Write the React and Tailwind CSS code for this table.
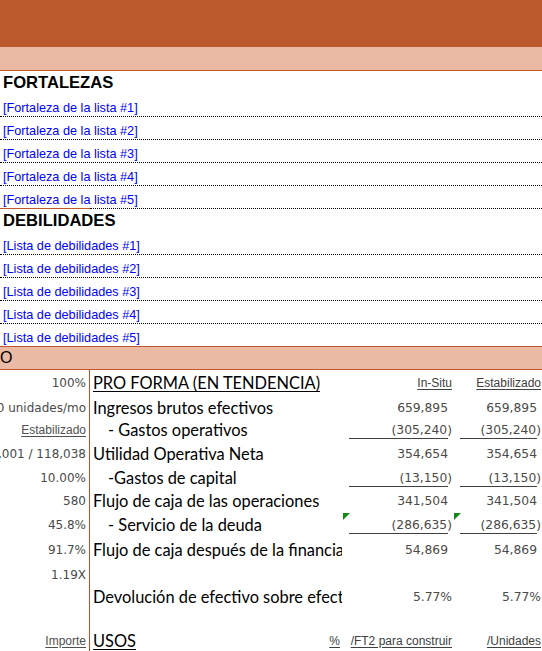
import React from 'react'

// ── fuentes ──────────────────────────────────────
const ARIAL = { fontFamily: '"Liberation Sans", Arial, sans-serif' }
const GILL = { fontFamily: 'Lato, "Open Sans", sans-serif' }
const NUM = { fontFamily: '"DejaVu Sans", Verdana, sans-serif' }

const fortalezas = [1, 2, 3, 4, 5].map((n) => `[Fortaleza de la lista #${n}]`)
const debilidades = [1, 2, 3, 4, 5].map((n) => `[Lista de debilidades #${n}]`)

// filas de la tabla pro forma
const rows = [
  { h: 26, left: '100%', label: 'PRO FORMA (EN TENDENCIA)', head: true, c3: 'In-Situ', c4: 'Estabilizado', hdr: true },
  { h: 23, left: '240 unidades/mo', label: 'Ingresos brutos efectivos', c3: '659,895', c4: '659,895' },
  { h: 22, left: 'Estabilizado', leftU: true, label: '- Gastos operativos', indent: true, c3: '(305,240)', c4: '(305,240)', u: true },
  { h: 25, left: '72,001 / 118,038', label: 'Utilidad Operativa Neta', c3: '354,654', c4: '354,654' },
  { h: 23, left: '10.00%', label: '-Gastos de capital', indent: true, c3: '(13,150)', c4: '(13,150)', u: true },
  { h: 24, left: '580', label: 'Flujo de caja de las operaciones', c3: '341,504', c4: '341,504' },
  { h: 23, left: '45.8%', label: '- Servicio de la deuda', indent: true, c3: '(286,635)', c4: '(286,635)', u: true, tri: true },
  { h: 27, left: '91.7%', label: 'Flujo de caja después de la financiación', c3: '54,869', c4: '54,869' },
  { h: 23, left: '1.19X', label: '' },
  { h: 22, left: '', label: 'Devolución de efectivo sobre efectivo', c3: '5.77%', c4: '5.77%', pct: true },
  { h: 22, left: '', label: '' },
  { h: 21, left: 'Importe', leftU: true, label: 'USOS', head: true, pctLabel: true, c3: '/FT2 para construir', c4: '/Unidades', hdr: true },
]

function Tri() {
  return (
    <svg className="absolute left-[1px] top-0" width="7" height="7" viewBox="0 0 7 7">
      <polygon points="0,0 7,0 0,7" fill="#138a13" />
    </svg>
  )
}

function ValueCell({ v, r }) {
  if (!v) return <div className="relative overflow-hidden" style={{ height: r.h }} />
  const neg = v.startsWith('(')
  const pr = r.hdr || r.pct || neg ? 'pr-[1px]' : 'pr-[5px]'
  return (
    <div style={{ height: r.h }} className={`relative flex items-center justify-end leading-[16px] ${pr}`}>
      {r.tri && <Tri />}
      {r.hdr ? (
        <span style={ARIAL} className="text-[12px] text-[#404040] underline underline-offset-2 decoration-[#404040]">{v}</span>
      ) : (
        <span style={NUM} className="text-[12.3px] text-[#4a4a4a] whitespace-nowrap">{v}</span>
      )}
      {r.u && <div className="absolute left-[7px] right-[5px] bottom-[2px] border-b border-[#404040]" />}
    </div>
  )
}

function ListRow({ text, last, orangeA }) {
  return (
    <div>
      <div style={ARIAL} className="h-[22px] flex items-end pl-[3px] text-[12.7px] leading-[15px] text-[#0000ff] whitespace-nowrap">
        {text}
      </div>
      {last ? (
        <div className="h-px bg-[#c0582c]" />
      ) : orangeA ? (
        <div className="flex h-px">
          <div className="w-[90px] bg-[#c0582c]" />
          <div className="flex-1 border-t border-dotted border-black" />
        </div>
      ) : (
        <div className="border-t border-dotted border-black" />
      )}
    </div>
  )
}

function Heading({ children }) {
  return (
    <div style={ARIAL} className="h-[23px] flex items-end pb-[1px] pl-[3px] text-[16.6px] leading-[20px] font-bold text-black">
      {children}
    </div>
  )
}

export default function App() {
  return (
    <div className="w-[542px] h-[651px] overflow-hidden bg-white">
      <div className="h-[47px] bg-[#bd5a2d]" />
      <div className="h-[24px] bg-[#eabaa5] border-b border-[#c0582c]" />

      <Heading>FORTALEZAS</Heading>
      {fortalezas.map((t, i) => (
        <ListRow key={t} text={t} orangeA={i === 4} />
      ))}

      <Heading>DEBILIDADES</Heading>
      {debilidades.map((t, i) => (
        <ListRow key={t} text={t} last={i === 4} />
      ))}

      <div style={ARIAL} className="h-[23px] bg-[#eabaa5] border-b border-[#c0582c] flex items-center text-[16px] leading-[18px] text-black">
        O
      </div>

      <div className="grid grid-cols-[90px_252px_111px_89px]">
        {rows.map((r, i) => (
          <React.Fragment key={i}>
            <div style={{ height: r.h }} className="border-r border-[#b5542b] flex items-center justify-end pr-[3px] overflow-hidden leading-[16px]">
              {r.leftU ? (
                <span style={ARIAL} className="text-[12px] text-[#505050] underline underline-offset-2 whitespace-nowrap">{r.left}</span>
              ) : (
                <span style={NUM} className="text-[12px] text-[#4a4a4a] whitespace-nowrap shrink-0">{r.left}</span>
              )}
            </div>
            <div style={{ ...GILL, height: r.h }} className={`flex items-center overflow-hidden whitespace-nowrap text-[16.4px] leading-[18px] text-black ${r.indent ? 'pl-[18px]' : 'pl-[3px]'}`}>
              <span className={r.head ? 'underline underline-offset-2' : ''}>{r.label}</span>
              {r.pctLabel && (
                <span style={ARIAL} className="ml-auto pr-[2px] text-[12px] text-[#404040] underline underline-offset-2">%</span>
              )}
            </div>
            <ValueCell v={r.c3} r={r} />
            <ValueCell v={r.c4} r={r} />
          </React.Fragment>
        ))}
      </div>
    </div>
  )
}
